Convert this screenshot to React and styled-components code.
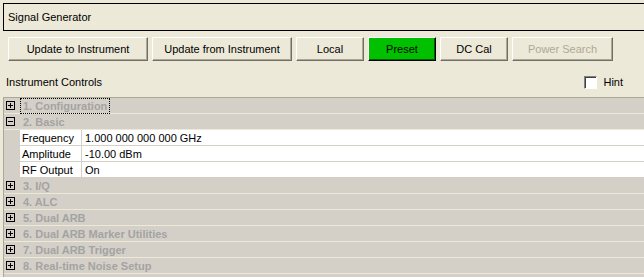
import React from "react";
import styled, { createGlobalStyle } from "styled-components";

const GlobalStyle = createGlobalStyle`
  html, body {
    margin: 0;
    padding: 0;
    background: #ece9d8;
    overflow: hidden;
  }
  body {
    font-family: "Liberation Sans", Arial, sans-serif;
    font-size: 11px;
    color: #000;
  }
`;

const Page = styled.div`
  width: 644px;
  height: 277px;
  padding: 3px 0 0 3px;
  box-sizing: border-box;
  overflow: hidden;
`;

const TitleBox = styled.div`
  height: 28px;
  box-sizing: border-box;
  border: 1px solid #000;
  margin-right: -20px;
  display: flex;
  align-items: center;
  padding-left: 4px;
`;

const ButtonRow = styled.div`
  display: flex;
  gap: 4px;
  margin-top: 6px;
  padding-left: 5px;
`;

const Button = styled.button`
  width: ${(p) => p.$w}px;
  height: 24px;
  box-sizing: border-box;
  padding: 0;
  font-family: inherit;
  font-size: 11px;
  background: ${(p) => (p.$active ? "#00c000" : "#ece9d8")};
  color: ${(p) => (p.disabled ? "#aca899" : "#000")};
  border: 1px solid;
  border-color: #fff ${(p) => (p.$active ? "#000" : "#716f64")}
    ${(p) => (p.$active ? "#000" : "#716f64")} #fff;
  box-shadow: inset -1px -1px 0 ${(p) => (p.$active ? "#006000" : "#aca899")};
`;

const HeaderRow = styled.div`
  height: 36px;
  box-sizing: border-box;
  padding: 6px 0 0 3px;
  display: flex;
  align-items: center;
`;

const HintLabel = styled.label`
  margin-left: auto;
  margin-right: 21px;
  display: flex;
  align-items: center;
  gap: 6px;
`;

const CheckBox = styled.span`
  width: 13px;
  height: 13px;
  box-sizing: border-box;
  background: #fff;
  border: 1px solid;
  border-color: #808080 #fff #fff #808080;
  box-shadow: inset 1px 1px 0 #404040;
`;

const Grid = styled.div`
  border-top: 1px solid #aca899;
  border-left: 1px solid #aca899;
  background: #d4d0c8;
  margin-right: -20px;
  height: 200px;
`;

const CategoryRow = styled.div`
  height: 16px;
  box-sizing: border-box;
  border-bottom: 1px solid #ece9d8;
  display: flex;
  align-items: center;
  padding-left: 2px;
`;

const CategoryLabel = styled.span`
  margin-left: 6px;
  padding: 0 2px;
  line-height: 14px;
  font-weight: bold;
  color: #a3a3a3;
  outline: ${(p) => (p.$focused ? "1px dotted #000" : "none")};
`;

const PropRow = styled.div`
  height: 16px;
  display: flex;
  padding-left: 16px;
`;

const Cell = styled.div`
  height: 16px;
  box-sizing: border-box;
  background: #fff;
  border-bottom: 1px solid #d4d0c8;
  display: flex;
  align-items: center;
  padding-left: ${(p) => (p.$name ? 2 : 3)}px;
  ${(p) =>
    p.$name
      ? "width: 62px; border-right: 1px solid #d4d0c8;"
      : "flex: 1;"}
`;

function Expander({ open }) {
  return (
    <svg width="9" height="9" viewBox="0 0 9 9">
      <rect x="0.5" y="0.5" width="8" height="8" fill="none" stroke="#000" />
      <line x1="2" y1="4.5" x2="7" y2="4.5" stroke="#000" />
      {!open && <line x1="4.5" y1="2" x2="4.5" y2="7" stroke="#000" />}
    </svg>
  );
}

const buttons = [
  { label: "Update to Instrument", w: 140 },
  { label: "Update from Instrument", w: 140 },
  { label: "Local", w: 68 },
  { label: "Preset", w: 68, active: true },
  { label: "DC Cal", w: 68 },
  { label: "Power Search", w: 101, disabled: true },
];

const properties = [
  ["Frequency", "1.000 000 000 000 GHz"],
  ["Amplitude", "-10.00 dBm"],
  ["RF Output", "On"],
];

const laterCategories = [
  "3. I/Q",
  "4. ALC",
  "5. Dual ARB",
  "6. Dual ARB Marker Utilities",
  "7. Dual ARB Trigger",
  "8. Real-time Noise Setup",
];

export default function App() {
  return (
    <Page>
      <GlobalStyle />
      <TitleBox>Signal Generator</TitleBox>
      <ButtonRow>
        {buttons.map((b) => (
          <Button key={b.label} $w={b.w} $active={b.active} disabled={b.disabled}>
            {b.label}
          </Button>
        ))}
      </ButtonRow>
      <HeaderRow>
        <span>Instrument Controls</span>
        <HintLabel>
          <CheckBox />
          Hint
        </HintLabel>
      </HeaderRow>
      <Grid>
        <CategoryRow>
          <Expander />
          <CategoryLabel $focused>1. Configuration</CategoryLabel>
        </CategoryRow>
        <CategoryRow>
          <Expander open />
          <CategoryLabel>2. Basic</CategoryLabel>
        </CategoryRow>
        {properties.map(([name, value]) => (
          <PropRow key={name}>
            <Cell $name>{name}</Cell>
            <Cell>{value}</Cell>
          </PropRow>
        ))}
        {laterCategories.map((c) => (
          <CategoryRow key={c}>
            <Expander />
            <CategoryLabel>{c}</CategoryLabel>
          </CategoryRow>
        ))}
      </Grid>
    </Page>
  );
}
